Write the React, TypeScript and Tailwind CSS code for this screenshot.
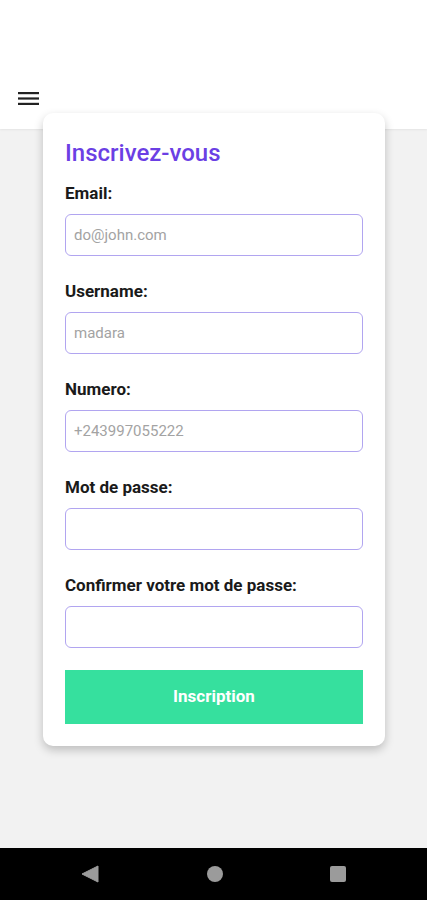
import React from "react";

const fields = [
  { label: "Email:", placeholder: "do@john.com" },
  { label: "Username:", placeholder: "madara" },
  { label: "Numero:", placeholder: "+243997055222" },
  { label: "Mot de passe:", placeholder: "" },
  { label: "Confirmer votre mot de passe:", placeholder: "" },
];

export default function App() {
  return (
    <div
      className="h-[900px] w-[427px] flex flex-col bg-[#f2f2f2] overflow-hidden"
      style={{ fontFamily: "Roboto, 'Noto Sans', sans-serif" }}
    >
      <div className="h-[129px] bg-white shrink-0 flex items-end pb-[23px] pl-[18px] shadow-[0_1px_2px_rgba(0,0,0,0.06)]">
        <svg width="21" height="15" viewBox="0 0 21 15">
          <rect x="0" y="1" width="21" height="2.2" fill="#222" />
          <rect x="0" y="6.4" width="21" height="2.2" fill="#222" />
          <rect x="0" y="11.8" width="21" height="2.2" fill="#222" />
        </svg>
      </div>
      <div className="flex-1">
        <div className="relative ml-[43px] w-[342px] -mt-[16px] bg-white rounded-[10px] shadow-[0_4px_10px_rgba(0,0,0,0.22)] px-[22px] pt-[26px] pb-[22px]">
          <h1 className="text-[24px] leading-[28px] font-medium text-[#6b3fe4] mb-[16px]">
            Inscrivez-vous
          </h1>
          {fields.map((f, i) => (
            <div key={i} className={i < fields.length - 1 ? "mb-[25px]" : "mb-[22px]"}>
              <div className="text-[17px] leading-[20px] font-bold text-[#1a1a1a] mb-[11px]">
                {f.label}
              </div>
              <div className="h-[42px] w-[298px] rounded-[6px] border-[1.5px] border-[#b1a5f0] flex items-center pl-[8px] text-[15px] text-[#a3a3a3]">
                {f.placeholder}
              </div>
            </div>
          ))}
          <div className="h-[54px] w-[298px] bg-[#36e09e] flex items-center justify-center text-white text-[17px] font-bold">
            Inscription
          </div>
        </div>
      </div>
      <div className="h-[52px] bg-black shrink-0 flex items-center">
        <div className="w-full flex items-center justify-between px-[81px]">
          <svg width="18" height="18" viewBox="0 0 18 18">
            <path d="M17 1 L17 17 L1 9 Z" fill="#9b9b9b" stroke="#9b9b9b" strokeWidth="1" strokeLinejoin="round" />
          </svg>
          <div className="w-[16px] h-[16px] rounded-full bg-[#9b9b9b]" />
          <div className="w-[16px] h-[16px] rounded-[2px] bg-[#9b9b9b]" />
        </div>
      </div>
    </div>
  );
}
